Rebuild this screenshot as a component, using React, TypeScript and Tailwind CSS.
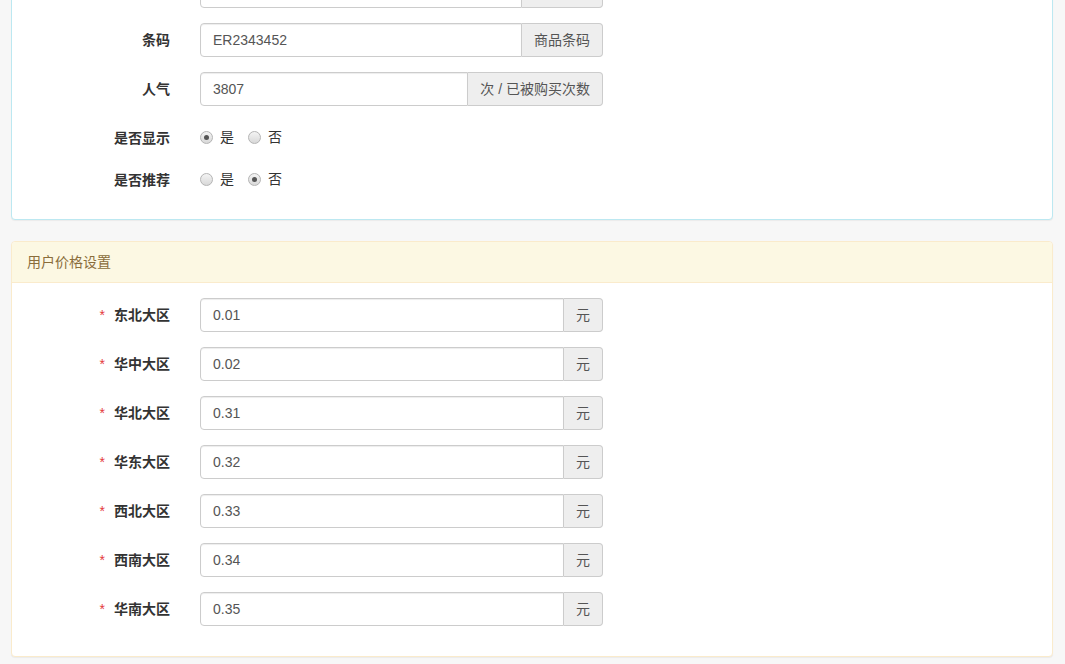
import { ReactNode } from "react";

const FONT = {
  fontFamily: '"Liberation Sans", Arial, "Noto Sans CJK SC", sans-serif',
};

const regions = [
  { name: "东北大区", price: "0.01" },
  { name: "华中大区", price: "0.02" },
  { name: "华北大区", price: "0.31" },
  { name: "华东大区", price: "0.32" },
  { name: "西北大区", price: "0.33" },
  { name: "西南大区", price: "0.34" },
  { name: "华南大区", price: "0.35" },
];

function FormRow({
  label,
  required,
  children,
}: {
  label: string;
  required?: boolean;
  children: ReactNode;
}) {
  return (
    <div className="mb-[15px] flex">
      <label className="w-[143px] shrink-0 pt-[7px] text-right text-sm font-bold leading-5 text-[#333]">
        {required && <span className="mr-[9px] font-normal text-[#e4393c]">*</span>}
        {label}
      </label>
      <div className="ml-[30px] w-[403px]">{children}</div>
    </div>
  );
}

function AddonInput({ value, addon }: { value: string; addon: string }) {
  return (
    <div className="flex h-[34px] text-sm text-[#555]">
      <div className="flex flex-1 items-center rounded-l border border-[#ccc] bg-white px-3 shadow-[inset_0_1px_1px_rgba(0,0,0,0.075)]">
        {value}
      </div>
      <div className="flex items-center whitespace-nowrap rounded-r border border-l-0 border-[#ccc] bg-[#eee] px-3">
        {addon}
      </div>
    </div>
  );
}

function Radio({ checked, label }: { checked: boolean; label: string }) {
  return (
    <span className="mr-[14px] inline-flex items-center">
      <span className="flex h-[13px] w-[13px] items-center justify-center rounded-full border border-[#b4b4b4] bg-gradient-to-b from-[#f4f4f4] to-[#d8d8d8]">
        {checked && <span className="h-[5px] w-[5px] rounded-full bg-[#555]" />}
      </span>
      <span className="ml-[7px] text-sm text-[#333]">{label}</span>
    </span>
  );
}

function RadioRow({ label, yes }: { label: string; yes: boolean }) {
  return (
    <FormRow label={label}>
      <div className="flex h-[27px] items-end pb-[1px] leading-5">
        <Radio checked={yes} label="是" />
        <Radio checked={!yes} label="否" />
      </div>
    </FormRow>
  );
}

export default function App() {
  return (
    <div className="min-h-screen overflow-hidden bg-[#f7f7f7] pl-[11px] pr-[12px]" style={FONT}>
      {/* 基本信息 */}
      <div className="mt-[-42px] rounded border border-[#bce8f1] bg-white px-[15px] pt-[15px] shadow-[0_1px_1px_rgba(0,0,0,0.05)]">
        <FormRow label="货号">
          <AddonInput value="HH2343452" addon="商品货号" />
        </FormRow>
        <FormRow label="条码">
          <AddonInput value="ER2343452" addon="商品条码" />
        </FormRow>
        <FormRow label="人气">
          <AddonInput value="3807" addon="次 / 已被购买次数" />
        </FormRow>
        <RadioRow label="是否显示" yes />
        <RadioRow label="是否推荐" yes={false} />
        <div className="h-[14px]" />
      </div>

      {/* 用户价格设置 */}
      <div className="mt-[21px] rounded border border-[#faebcc] bg-white shadow-[0_1px_1px_rgba(0,0,0,0.05)]">
        <div className="rounded-t border-b border-[#faebcc] bg-[#fcf8e3] px-[15px] py-[10px] text-sm leading-5 text-[#8a6d3b]">
          用户价格设置
        </div>
        <div className="px-[15px] pt-[15px] pb-[15px]">
          {regions.map((r) => (
            <FormRow key={r.name} label={r.name} required>
              <AddonInput value={r.price} addon="元" />
            </FormRow>
          ))}
        </div>
      </div>
    </div>
  );
}
